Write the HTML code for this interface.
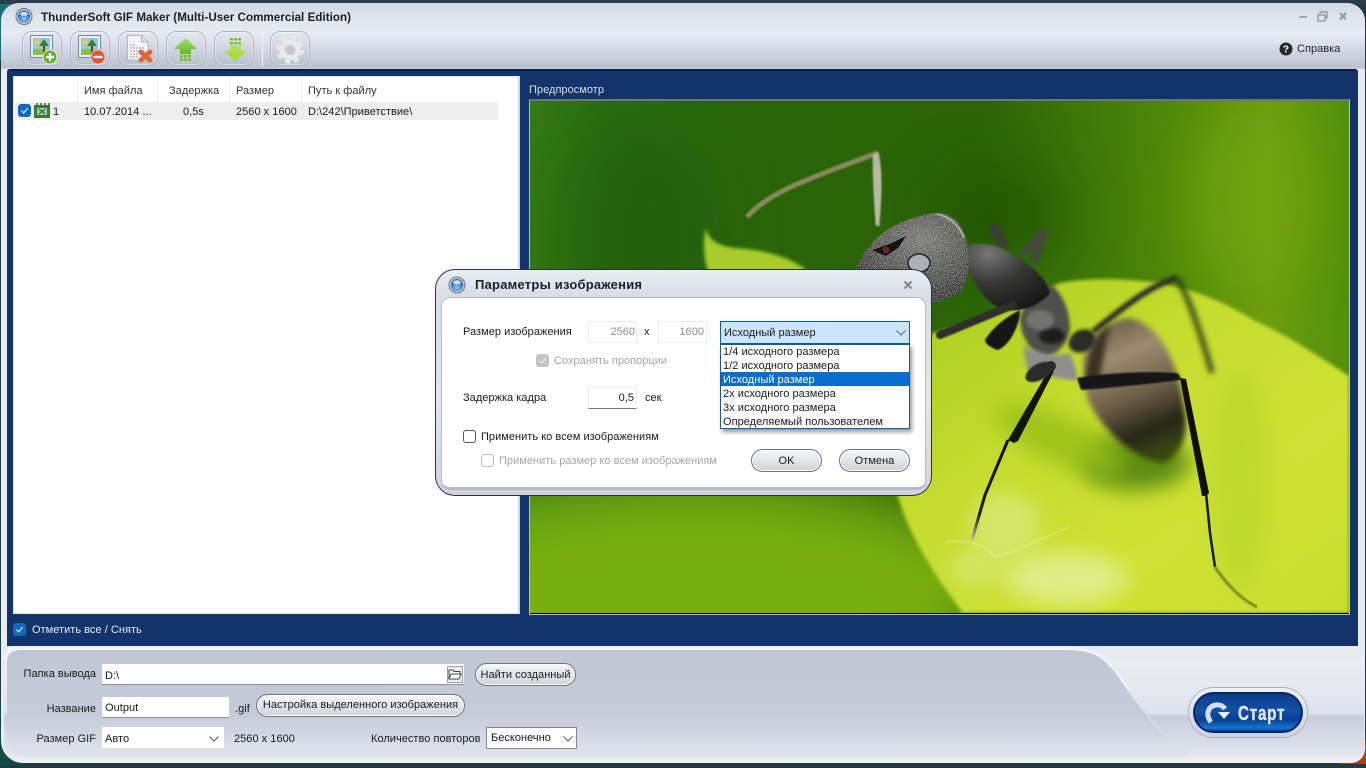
<!DOCTYPE html>
<html><head><meta charset="utf-8"><style>
html,body{margin:0;padding:0;width:1366px;height:768px;overflow:hidden;background:#24383f}
*{box-sizing:border-box}
body{font-family:"Liberation Sans",sans-serif;font-size:11px;color:#1a1a1a;letter-spacing:.03px}
.a{position:absolute}
.t{position:absolute;line-height:14px;white-space:nowrap;margin-top:1px}
.r{text-align:right}
.tb{position:absolute;top:31px;width:40px;height:35px;border-radius:10px;border:1px solid #aeb6c4;background:linear-gradient(#e4e8f0,#d0d6e0 50%,#b9c1ce);box-shadow:inset 0 0 0 1px rgba(255,255,255,.45)}
.tb svg{position:absolute;left:0;top:0}
.inp{position:absolute;background:#fff;border-bottom:1px solid #8c93a0}
.pill{position:absolute;border:1px solid #6d7480;border-radius:12px;background:linear-gradient(#f6f7f9,#e2e5ea 50%,#cfd3da);text-align:center;line-height:22px;box-shadow:inset 0 0 0 1px #fff}
.cb{position:absolute;width:13px;height:13px;border-radius:3px}
</style></head><body>
<div class="a" style="left:0;top:0;width:1366px;height:768px;background:#24383f"></div>
<div class="a" style="left:0;top:0;width:30px;height:60px;background:#17706f"></div>
<div class="a" style="left:0;top:0;width:1366px;height:4px;background:#2a3d4c"></div>
<div class="a" style="left:0;top:700px;width:24px;height:65px;background:#0f4a47"></div>
<div class="a" style="left:1340px;top:740px;width:26px;height:24px;background:#b13c10"></div>
<div class="a" style="left:1px;top:3px;width:1364px;height:760px;border-radius:18px 18px 14px 22px;background:#e8ebf1;overflow:hidden">
 <div class="a" style="left:0;top:0;width:1364px;height:66px;background:linear-gradient(#cfd5de 0,#dfe3ea 12px,#e3e7ee 24px,#e8ecf4 30px,#d9dfe9 42px,#bcc4d1 64px,#c7cdd9 66px)"></div>
</div>
<svg class="a" style="left:15px;top:7px" width="20" height="20"><defs><radialGradient id="g1" cx=".5" cy=".7" r=".6"><stop offset="0" stop-color="#8cc8f8"/><stop offset="1" stop-color="#1d5fb8"/></radialGradient></defs><circle cx="9" cy="9.500" r="8" fill="#c0c7d2" stroke="#6b7685"/><circle cx="9" cy="9.500" r="6" fill="url(#g1)"/><ellipse cx="9" cy="6.800" rx="4" ry="2" fill="#e4f0ff" opacity=".85"/></svg>
<div class="t" style="left:41px;top:9px;font-size:12px;font-weight:bold;color:#1a1f26;transform:scaleX(.968);transform-origin:0 0">ThunderSoft GIF Maker (Multi-User Commercial Edition)</div>
<svg class="a" style="left:1295px;top:8px" width="60" height="16" fill="none"><path d="M4 9h8" stroke="#a3aab5" stroke-width="2"/><rect x="23" y="7" width="7" height="6" stroke="#949ba6" stroke-width="1.400"/><path d="M25 6V4h7v6h-2" stroke="#949ba6" stroke-width="1.400"/><path d="M45 5l6 6.500M51 5l-6 6.500" stroke="#949ba6" stroke-width="2.200"/></svg>
<svg class="a" style="left:1279px;top:42px" width="14" height="14"><circle cx="7" cy="7" r="6.500" fill="#26282c"/><text x="7" y="10.500" font-size="10" font-weight="bold" fill="#fff" text-anchor="middle" font-family="Liberation Sans">?</text></svg>
<div class="t" style="left:1297px;top:41px;color:#20242a">Справка</div>
<!-- toolbar -->
<div class="tb" style="left:22px"><svg width="40" height="35"><rect x="7.500" y="3.500" width="22" height="22" fill="#e8eef8" stroke="#6f88aa"/><rect x="10" y="6" width="17" height="17" fill="#8fc9f2"/><rect x="10" y="17" width="17" height="6" fill="#86c23c"/><circle cx="14" cy="10" r="3" fill="#f5c842"/><path d="M21 7l5 7H16z" fill="#3f7d32"/><rect x="20" y="13" width="2" height="8" fill="#6b4a2a"/><circle cx="27" cy="25" r="7" fill="#5fae2e" stroke="#e8f4d8"/><path d="M27 21v8M23 25h8" stroke="#fff" stroke-width="2.400"/></svg></div>
<div class="tb" style="left:70px"><svg width="40" height="35"><rect x="7.500" y="3.500" width="22" height="22" fill="#e8eef8" stroke="#6f88aa"/><rect x="10" y="6" width="17" height="17" fill="#8fc9f2"/><rect x="10" y="17" width="17" height="6" fill="#86c23c"/><circle cx="14" cy="10" r="3" fill="#f5c842"/><path d="M21 7l5 7H16z" fill="#3f7d32"/><rect x="20" y="13" width="2" height="8" fill="#6b4a2a"/><circle cx="27" cy="25" r="7" fill="#e2533c" stroke="#f3c8b8"/><path d="M22.500 25h9" stroke="#fff" stroke-width="2.400"/></svg></div>
<div class="tb" style="left:118px"><svg width="40" height="35"><path d="M8.500 3.500h14l6.500 6.500v18H8.500z" fill="#f2f3f4" stroke="#b4b8be"/><path d="M22.500 3.500V10H29" fill="#d8dbe0" stroke="#b4b8be"/><path d="M11 13h6M11 16h14M11 19h10M11 22h8M11 25h8" stroke="#9a9ea5" stroke-dasharray="2 1"/><path d="M22 20l9 8M31 20l-9 8" stroke="#dc6a3a" stroke-width="5" stroke-linecap="round"/></svg></div>
<div class="tb" style="left:166px"><svg width="40" height="35"><defs><linearGradient id="g2" x1="0" y1="0" x2="0" y2="1"><stop offset="0" stop-color="#9ae85e"/><stop offset="1" stop-color="#68b52c"/></linearGradient></defs><path d="M18.500 6L30 17h-6v5H13v-5H7z" fill="url(#g2)"/><path d="M13 23h3v2.500h-3zM17 23h3v2.500h-3zM21 23h3v2.500h-3zM13 26.500h3V29h-3zM17 26.500h3V29h-3zM21 26.500h3V29h-3z" fill="#7ab83f"/></svg></div>
<div class="tb" style="left:214px"><svg width="40" height="35"><defs><linearGradient id="g3" x1="0" y1="0" x2="0" y2="1"><stop offset="0" stop-color="#b4dc72"/><stop offset="1" stop-color="#a4dc18"/></linearGradient></defs><path d="M15 6h3v2.500h-3zM19 6h3v2.500h-3zM23 6h3v2.500h-3zM15 10h3v2.500h-3zM19 10h3v2.500h-3zM23 10h3v2.500h-3z" fill="#7ab83f"/><path d="M15 13.500h11V19h6L20.500 29 9 19h6z" fill="url(#g3)"/></svg></div>
<div class="a" style="left:262px;top:32px;width:1px;height:34px;background:#f2f4f8"></div>
<div class="tb" style="left:270px"><svg width="40" height="35"><circle cx="19" cy="18" r="12" fill="none" stroke="#e8e9eb" stroke-width="4" stroke-dasharray="5 4.420"/><circle cx="19" cy="18" r="10.500" fill="#e8e9eb"/><circle cx="19" cy="18" r="5" fill="#c6c8cd"/></svg></div>
<!-- navy -->
<div class="a" style="left:7px;top:69px;width:1351px;height:577px;background:#13336b;border-radius:3px 3px 0 0;border-top:2px solid #0b1f46"></div>
<!-- list -->
<div class="a" style="left:13px;top:76px;width:507px;height:538px;background:#fff;border:1px solid #dfe3ea;border-right:2px solid #cfd4dc"></div>
<div class="a" style="left:15px;top:102px;width:483px;height:18px;background:#eeeeee"></div>
<div class="a" style="left:77px;top:78px;width:1px;height:24px;background:#ececec"></div>
<div class="a" style="left:157px;top:78px;width:1px;height:24px;background:#ececec"></div>
<div class="a" style="left:229px;top:78px;width:1px;height:24px;background:#ececec"></div>
<div class="a" style="left:301px;top:78px;width:1px;height:24px;background:#ececec"></div>
<div class="t" style="left:84px;top:83px;color:#333">Имя файла</div>
<div class="t" style="left:169px;top:83px;color:#333">Задержка</div>
<div class="t" style="left:236px;top:83px;color:#333">Размер</div>
<div class="t" style="left:308px;top:83px;color:#333">Путь к файлу</div>
<svg class="cb" style="left:18px;top:104px"><rect width="13" height="13" rx="3" fill="#1469bd"/><path d="M3.500 6.500l2.200 2.500 4-5" stroke="#dfeeff" fill="none" stroke-width="1.200"/></svg>
<svg class="a" style="left:34px;top:103px" width="17" height="16"><rect x="0" y="2" width="16" height="13" fill="#3f7a35"/><path d="M2 0h2v2H2zM6 0h2v2H6zM10 0h2v2h-2zM14 0h2v2h-2z" fill="#777"/><path d="M3 5h10v7H3z" fill="#a6cba0"/><path d="M5 6l6 5M11 6l-6 5" stroke="#2a4f2a"/></svg>
<div class="t" style="left:53px;top:104px">1</div>
<div class="t" style="left:84px;top:104px">10.07.2014 ...</div>
<div class="t" style="left:183px;top:104px">0,5s</div>
<div class="t" style="left:236px;top:104px">2560 x 1600</div>
<div class="t" style="left:308px;top:104px">D:\242\Приветствие\</div>
<!-- preview -->
<div class="t" style="left:529px;top:82px;color:#d7deea">Предпросмотр</div>
<div class="a" style="left:529px;top:99px;width:821px;height:516px;border:1px solid #b9bfc9;border-top:2px solid #6f7580;background:#000"></div>
<svg class="a" style="left:530px;top:101px" width="819" height="512" viewBox="530 101 819 512">
<defs>
<linearGradient id="bg" x1="0" y1="0" x2="1" y2="0"><stop offset="0" stop-color="#347a14"/><stop offset=".1" stop-color="#2a6c12"/><stop offset=".3" stop-color="#2a6408"/><stop offset=".55" stop-color="#2c6406"/><stop offset=".78" stop-color="#4f8808"/><stop offset=".9" stop-color="#6c9e0e"/><stop offset="1" stop-color="#52900c"/></linearGradient>
<linearGradient id="leafg" x1="0" y1="0" x2="1" y2="1"><stop offset="0" stop-color="#a6cc1e"/><stop offset=".4" stop-color="#c6dc2e"/><stop offset=".7" stop-color="#d0e234"/><stop offset="1" stop-color="#c8de2c"/></linearGradient>
<linearGradient id="leg" x1="0" y1="0" x2="0" y2="1"><stop offset="0" stop-color="#101010"/><stop offset=".75" stop-color="#1d1c10"/><stop offset="1" stop-color="#c9bda0"/></linearGradient>
<radialGradient id="head" cx=".62" cy=".3" r=".75"><stop offset="0" stop-color="#777972"/><stop offset=".55" stop-color="#484a44"/><stop offset="1" stop-color="#1c1d1b"/></radialGradient>
<radialGradient id="thx" cx=".3" cy=".15" r=".9"><stop offset="0" stop-color="#767673"/><stop offset=".5" stop-color="#363633"/><stop offset="1" stop-color="#181816"/></radialGradient>
<linearGradient id="abd" x1=".3" y1="0" x2=".6" y2="1"><stop offset="0" stop-color="#6a5c46"/><stop offset=".25" stop-color="#9c8c70"/><stop offset=".55" stop-color="#6e5f48"/><stop offset=".8" stop-color="#262616"/><stop offset="1" stop-color="#3a4a10"/></linearGradient>
<linearGradient id="fade" gradientUnits="userSpaceOnUse" x1="0" y1="0" x2="0" y2="1"><stop offset="0" stop-color="#fff"/></linearGradient>
<filter id="b30" filterUnits="userSpaceOnUse" x="430" y="0" width="1019" height="712"><feGaussianBlur stdDeviation="30"/></filter>
<filter id="b8" filterUnits="userSpaceOnUse" x="430" y="0" width="1019" height="712"><feGaussianBlur stdDeviation="10"/></filter>
<filter id="b3" filterUnits="userSpaceOnUse" x="430" y="0" width="1019" height="712"><feGaussianBlur stdDeviation="3"/></filter>
<filter id="b2" filterUnits="userSpaceOnUse" x="430" y="0" width="1019" height="712"><feGaussianBlur stdDeviation="1.800"/></filter>
<filter id="b1" filterUnits="userSpaceOnUse" x="430" y="0" width="1019" height="712"><feGaussianBlur stdDeviation=".8"/></filter>
<filter id="spk" x="0" y="0" width="100%" height="100%"><feTurbulence type="fractalNoise" baseFrequency="1.100" numOctaves="2" seed="4"/><feColorMatrix values="0 0 0 0 .8  0 0 0 0 .8  0 0 0 0 .78  1.200 1.200 0 0 -1.150"/><feComposite in2="SourceAlpha" operator="in" result="n"/><feMerge><feMergeNode in="SourceGraphic"/><feMergeNode in="n"/></feMerge></filter>
</defs>
<rect x="530" y="101" width="819" height="512" fill="url(#bg)"/>
<ellipse cx="640" cy="240" rx="80" ry="120" fill="#1a5a10" opacity=".6" filter="url(#b30)"/>
<ellipse cx="700" cy="590" rx="300" ry="110" fill="#78ae0e" filter="url(#b30)"/>
<ellipse cx="1000" cy="215" rx="70" ry="50" fill="#1f4f05" opacity=".6" filter="url(#b30)"/>
<ellipse cx="1250" cy="200" rx="60" ry="90" fill="#78a810" opacity=".6" filter="url(#b30)"/>
<!-- small leaf -->
<path d="M706 228c2 12 12 18 30 20 30 2 58 10 72 24l-96 8c-8-15-10-35-6-52z" fill="#a8cc2a" filter="url(#b2)"/>
<!-- main leaf -->
<path d="M925 335C960 328 1020 300 1060 283c30-6 70-4 100 0 40 8 70 22 95 38 35 15 70 40 94 55V613H963c-30-40-55-80-65-116-10-60 2-140 27-162z" fill="url(#leafg)" filter="url(#b2)"/>
<ellipse cx="1135" cy="462" rx="55" ry="28" fill="#4a7e0c" opacity=".85" filter="url(#b8)"/>
<ellipse cx="1060" cy="440" rx="70" ry="24" fill="#94c014" opacity=".8" transform="rotate(25 1060 440)" filter="url(#b8)"/>
<ellipse cx="1240" cy="480" rx="30" ry="110" fill="#b4d426" opacity=".6" filter="url(#b8)"/>
<ellipse cx="1005" cy="525" rx="34" ry="34" fill="#dcee90" opacity=".6" filter="url(#b8)"/>
<ellipse cx="1065" cy="578" rx="62" ry="26" fill="#e6f2a8" opacity=".7" filter="url(#b8)"/>
<ellipse cx="975" cy="568" rx="26" ry="20" fill="#d6ea7e" opacity=".6" filter="url(#b8)"/>
<path d="M945 542c20-4 40 2 50 15 20-5 50-20 75-30" stroke="#e8f4b0" stroke-width="1.200" fill="none" opacity=".6" filter="url(#b1)"/>
<!-- antenna -->
<path d="M747 217C770 190 820 175 877 153" stroke="#88895c" stroke-width="5" fill="none" filter="url(#b1)"/>
<path d="M878 152c5 20 3 50 1 74l-3-1c-2-25-3-50-3-70z" fill="#b9b9a4" stroke="#a8a98f" stroke-width="1" filter="url(#b1)"/>
<!-- back legs -->
<path d="M994 228l8 15" stroke="#3a3d34" stroke-width="10" fill="none" stroke-linecap="round" filter="url(#b2)"/>
<path d="M1043 232l-8 28M1040 235l-15 17" stroke="#44473f" stroke-width="8" fill="none" stroke-linecap="round" filter="url(#b2)"/>
<path d="M1093 332C1120 310 1150 285 1177 278" stroke="#2d3325" stroke-width="6" fill="none" filter="url(#b2)"/>
<path d="M1177 278c15 25 28 70 35 95" stroke="#2a3a14" stroke-width="5" fill="none" filter="url(#b3)"/>
<!-- abdomen -->
<path d="M1083 360C1088 340 1105 320 1130 318 1160 325 1178 360 1185 413 1190 440 1175 462 1160 463 1135 458 1100 430 1087 397z" fill="url(#abd)" filter="url(#b3)"/>
<path d="M1085 385c0-25 8-50 25-60-5 20-8 40-10 55z" fill="#3c3024" filter="url(#b3)"/>
<ellipse cx="1082" cy="341" rx="14" ry="11" fill="#2a2a28" transform="rotate(-30 1082 341)" filter="url(#b2)"/>
<!-- thorax -->
<path d="M1050 283C1062 293 1070 310 1070 328 1068 345 1055 357 1043 357 1030 352 1020 335 1020 317 1025 302 1040 292 1050 283z" fill="#50504c" filter="url(#b2)"/>
<ellipse cx="1052" cy="336" rx="13" ry="8" fill="#1c1c1a" filter="url(#b2)"/>
<ellipse cx="1040" cy="320" rx="14" ry="10" fill="#83837f" opacity=".7" filter="url(#b2)"/>
<path d="M1023 345C1035 352 1055 358 1070 353 1075 365 1078 375 1077 380 1065 380 1040 375 1027 370z" fill="#8f8f8d" filter="url(#b2)"/>
<path d="M962 248C975 241 995 242 1013 255 1030 265 1045 275 1050 293 1040 305 1025 312 1005 310 985 305 970 280 962 248z" fill="url(#thx)" filter="url(#b1)"/>
<!-- head -->
<path d="M846 300c6-30 20-55 38-68 18-12 40-19 56-19 16 2 24 14 27 30 3 22 2 42-8 50-15 8-25 12-45 10-30 0-50 5-68-3z" fill="url(#head)" filter="url(#spk)"/>
<path d="M937 214c14 3 23 13 27 24" stroke="#a8aaa4" stroke-width="2" fill="none"/>
<ellipse cx="919" cy="263" rx="11" ry="9" fill="#a8b0b8" stroke="#20242a" stroke-width="1.500"/>
<path d="M872 250l20-7 14-7-8 12-12 8z" fill="#141414"/><circle cx="886" cy="250" r="3.500" fill="#6e2422"/>
<!-- front leg -->
<path d="M940 335L1013 305" stroke="#2f2e2a" stroke-width="8" stroke-linecap="round" filter="url(#b1)"/>
<path d="M1020 310C1020 325 1010 345 998 350 990 348 985 343 985 340 990 332 1000 320 1020 310z" fill="#191916" filter="url(#b1)"/>
<!-- mid leg -->
<path d="M1050 368l4 3-36 70-4 2-6-3z" fill="#131310"/>
<path d="M1008 440L985 495 972 540" stroke="url(#leg)" stroke-width="3" fill="none"/>
<ellipse cx="1039" cy="372" rx="15" ry="8" fill="#2c2c2a" transform="rotate(-30 1039 372)" filter="url(#b1)"/>
<circle cx="1051" cy="366" r="5" fill="#2a2a28"/>
<path d="M1077 378C1105 373 1145 371 1177 373 1180 375 1181 378 1180 380 1150 384 1110 388 1081 390z" fill="#171714" filter="url(#b1)"/>
<path d="M1180 378l6 1 23 114-3 3h-4z" fill="#0f0f0c"/>
<path d="M1206 493l4 40 5 34" stroke="#131a08" stroke-width="2.500" fill="none"/>
<path d="M1215 567c10 15 25 32 42 40" stroke="#7a8a24" stroke-width="3" fill="none" filter="url(#b1)"/>
</svg>
<svg class="cb" style="left:13px;top:623px"><rect width="13" height="13" rx="3" fill="#1469bd"/><path d="M3.500 6.500l2.200 2.500 4-5" stroke="#dfeeff" fill="none" stroke-width="1.200"/></svg>
<div class="t" style="left:32px;top:622px;color:#e6ebf4">Отметить все / Снять</div>
<!-- bottom panel -->
<svg class="a" style="left:0;top:640px" width="1366" height="128" viewBox="0 640 1366 128">
<defs><linearGradient id="p1" x1="0" y1="0" x2="0" y2="1"><stop offset="0" stop-color="#c0c7d5"/><stop offset=".6" stop-color="#c5ccd8"/><stop offset="1" stop-color="#e0e4ec"/></linearGradient>
<linearGradient id="p2" x1="0" y1="0" x2="0" y2="1"><stop offset="0" stop-color="#eef1f6"/><stop offset=".57" stop-color="#dfe3eb"/><stop offset=".6" stop-color="#c8cfdb"/><stop offset=".88" stop-color="#dde1e9"/><stop offset="1" stop-color="#f0f2f6"/></linearGradient>
<linearGradient id="sf" gradientUnits="userSpaceOnUse" x1="0" y1="680" x2="0" y2="745"><stop offset="0" stop-color="#f4f6fa"/><stop offset="1" stop-color="#f4f6fa" stop-opacity="0"/></linearGradient></defs>
<path d="M4 660q0-14 14-14H1067c25 0 40 14 56 14H1364V748q0 15-15 15H28q-24 0-24-24z" fill="url(#p2)"/>
<path d="M7 663q0-13 13-13H1065c25 0 40 5 56 28 24 34 42 56 68 75V757H28q-21 0-21-21z" fill="url(#p1)"/>
<path d="M8 649H1067c22 0 34 4 50 24" stroke="#f4f6fa" stroke-width="2" fill="none"/>
<path d="M1117 673c22 32 40 58 62 74" stroke="url(#sf)" stroke-width="2" fill="none"/>
</svg>
<div class="t r" style="left:0;width:96px;top:666px">Папка вывода</div>
<div class="inp" style="left:102px;top:664px;width:362px;height:21px"></div>
<div class="t" style="left:105px;top:668px">D:\</div>
<svg class="a" style="left:447px;top:666px" width="16" height="17" fill="none"><rect x=".5" y=".5" width="15" height="16" fill="#eceef1" stroke="#9aa0aa"/><path d="M2 13V4h4l1 1.500h6V8M2 13l2-5h10l-2 5z" stroke="#444" fill="#fff"/></svg>
<div class="pill" style="left:475px;top:663px;width:101px;height:23px">Найти созданный</div>
<div class="t r" style="left:0;width:96px;top:701px">Название</div>
<div class="inp" style="left:102px;top:697px;width:127px;height:21px"></div>
<div class="t" style="left:105px;top:700px">Output</div>
<div class="t" style="left:235px;top:701px">.gif</div>
<div class="pill" style="left:256px;top:694px;width:209px;height:23px;line-height:20px">Настройка выделенного изображения</div>
<div class="t r" style="left:0;width:96px;top:731px">Размер GIF</div>
<div class="a" style="left:102px;top:727px;width:122px;height:21px;background:#fff"></div>
<div class="t" style="left:105px;top:731px">Авто</div>
<svg class="a" style="left:208px;top:735px" width="12" height="8" fill="none"><path d="M1.500 1.500L6 6l4.500-4.500" stroke="#555"/></svg>
<div class="t" style="left:234px;top:731px">2560 x 1600</div>
<div class="t" style="left:371px;top:731px">Количество повторов</div>
<div class="a" style="left:486px;top:727px;width:91px;height:22px;background:#fff;border:1px solid #80868f"></div>
<div class="t" style="left:491px;top:730px">Бесконечно</div>
<svg class="a" style="left:562px;top:735px" width="12" height="8" fill="none"><path d="M1.500 1.500L6 6l4.500-4.500" stroke="#555"/></svg>
<!-- start -->
<div class="a" style="left:1188px;top:687px;width:120px;height:51px;border-radius:26px;background:linear-gradient(#eef1f6,#cdd3de);border:1px solid #aab2c0"></div>
<div class="a" style="left:1193px;top:692px;width:110px;height:41px;border-radius:21px;background:linear-gradient(#0b3d8c,#134fa3 45%,#0a3f92 70%,#1279cf 92%,#0a3f8e);border:2px solid #06286a"></div>
<svg class="a" style="left:1203px;top:699px" width="28" height="28" fill="none"><path d="M8 23C2 16 5 7 13 6c4-.5 7 1 9 4" stroke="#d3dde9" stroke-width="5"/><path d="M15 13h12l-6 7z" fill="#e6ecf3"/></svg>
<div class="t" style="left:1238px;top:702px;font-size:20px;line-height:22px;font-weight:bold;color:#e0e5ee;-webkit-text-stroke:.4px #e0e5ee;transform:scaleX(.76);transform-origin:0 0;letter-spacing:1px">Старт</div>
<!-- dialog -->
<div class="a" style="left:435px;top:269px;width:497px;height:227px;border-radius:20px;border:1px solid #2a3440;background:linear-gradient(#e9edf3,#d8dde6 12%,#e2e6ec 60%,#cfd4dc)"></div>
<div class="a" style="left:441px;top:297px;width:485px;height:193px;border-radius:9px;background:#fff;border:1px solid #b8bec9;border-bottom:3px solid #b5bac4"></div>
<svg class="a" style="left:448px;top:276px" width="18" height="18"><circle cx="9" cy="9" r="8" fill="#c0c7d2" stroke="#6b7685"/><circle cx="9" cy="9" r="6" fill="url(#g1)"/><ellipse cx="9" cy="6.300" rx="4" ry="2" fill="#e4f0ff" opacity=".85"/></svg>
<div class="t" style="left:475px;top:277px;font-size:13px;font-weight:bold;color:#1c2026;letter-spacing:.23px">Параметры изображения</div>
<svg class="a" style="left:903px;top:280px" width="10" height="10"><path d="M1.500 1.500l7 7M8.500 1.500l-7 7" stroke="#7f8793" stroke-width="2"/></svg>
<div class="t" style="left:463px;top:324px">Размер изображения</div>
<div class="a" style="left:588px;top:321px;width:49px;height:22px;border:1px solid #ececec"></div>
<div class="t r" style="left:588px;width:47px;top:324px;color:#8d8d8d">2560</div>
<div class="t" style="left:644px;top:324px">x</div>
<div class="a" style="left:658px;top:321px;width:49px;height:22px;border:1px solid #ececec"></div>
<div class="t r" style="left:658px;width:46px;top:324px;color:#8d8d8d">1600</div>
<div class="a" style="left:720px;top:321px;width:190px;height:23px;border:1px solid #0f5ba6;background:#cde5fa"></div>
<div class="t" style="left:724px;top:325px">Исходный размер</div>
<svg class="a" style="left:895px;top:329px" width="12" height="8" fill="none"><path d="M1.500 1.500L6 6l4.500-4.500" stroke="#5a6a7a"/></svg>
<div class="a" style="left:720px;top:344px;width:190px;height:85px;background:#fff;border:1px solid #0f5ba6;box-shadow:2px 3px 4px rgba(0,0,0,.4)"></div>
<div class="a" style="left:721px;top:372px;width:188px;height:14px;background:#0a6ccc"></div>
<div class="t" style="left:723px;top:344px">1/4 исходного размера</div>
<div class="t" style="left:723px;top:358px">1/2 исходного размера</div>
<div class="t" style="left:723px;top:372px;color:#fff">Исходный размер</div>
<div class="t" style="left:723px;top:386px">2x исходного размера</div>
<div class="t" style="left:723px;top:400px">3x исходного размера</div>
<div class="t" style="left:723px;top:414px">Определяемый пользователем</div>
<svg class="cb" style="left:536px;top:354px"><rect width="13" height="13" rx="3" fill="#c4c4c4"/><path d="M3.500 6.500l2.200 2.500 4-5" stroke="#eee" fill="none" stroke-width="1.300"/></svg>
<div class="t" style="left:554px;top:353px;color:#a6a6a6">Сохранять пропорции</div>
<div class="t" style="left:463px;top:390px">Задержка кадра</div>
<div class="a" style="left:588px;top:387px;width:49px;height:22px;border:1px solid #ececec;border-bottom:1px solid #777"></div>
<div class="t r" style="left:588px;width:46px;top:390px">0,5</div>
<div class="t" style="left:645px;top:390px">сек</div>
<div class="a" style="left:463px;top:430px;width:13px;height:13px;border-radius:3px;border:1px solid #555;background:#fff"></div>
<div class="t" style="left:481px;top:429px">Применить ко всем изображениям</div>
<div class="a" style="left:481px;top:454px;width:13px;height:13px;border-radius:3px;border:1px solid #bbb;background:#fff"></div>
<div class="t" style="left:499px;top:453px;color:#a6a6a6">Применить размер ко всем изображениям</div>
<div class="pill" style="left:751px;top:449px;width:71px;height:23px">OK</div>
<div class="pill" style="left:839px;top:449px;width:71px;height:23px">Отмена</div>
</body></html>
